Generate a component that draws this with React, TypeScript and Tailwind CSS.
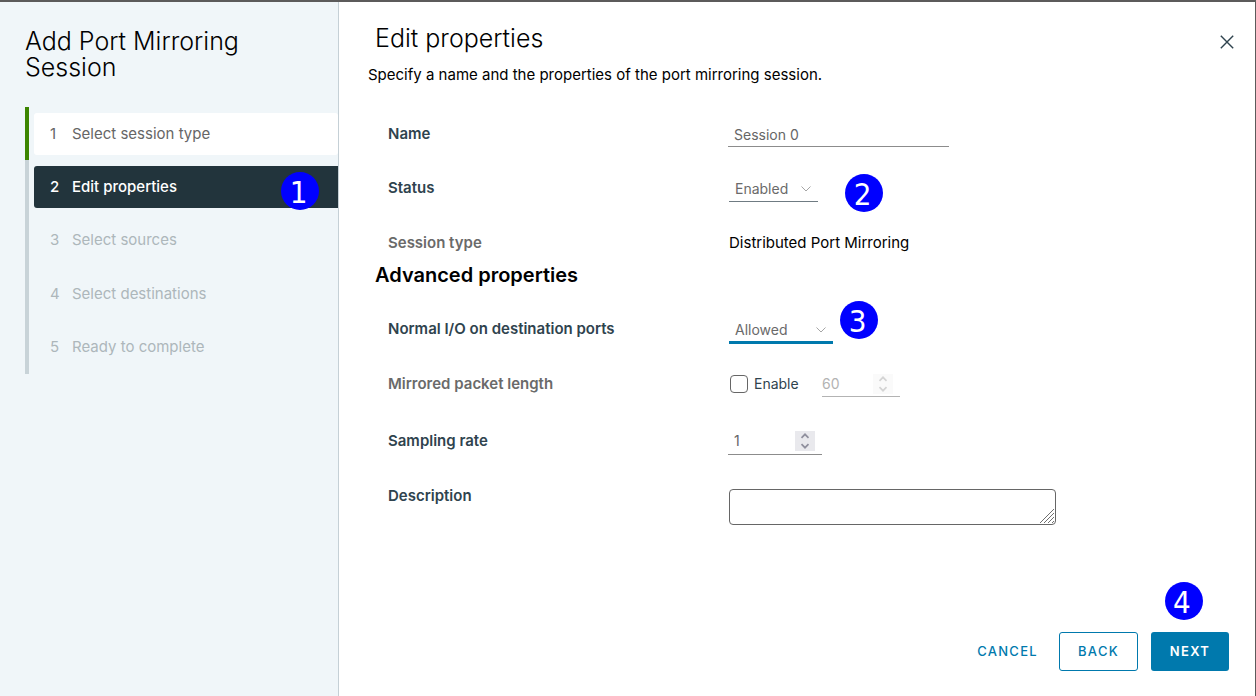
import { useState, type ReactNode } from "react";

type StepState = "done" | "current" | "upcoming";

const steps: { title: string; state: StepState }[] = [
  { title: "Select session type", state: "done" },
  { title: "Edit properties", state: "current" },
  { title: "Select sources", state: "upcoming" },
  { title: "Select destinations", state: "upcoming" },
  { title: "Ready to complete", state: "upcoming" },
];

const stepStyles: Record<StepState, string> = {
  done: "bg-white text-[#666666]",
  current: "rounded-r-none bg-[#22343c] font-medium text-white",
  upcoming: "text-[#adb7bb]",
};

function Marker({ value, className }: { value: number; className: string }) {
  return (
    <span
      className={`pointer-events-none absolute flex size-[38px] items-center justify-center rounded-full bg-[#0000ff] pt-[2px] pr-[3px] font-['DejaVu_Sans_Condensed','DejaVu_Sans',sans-serif] text-[31px] leading-none font-normal text-white ${className}`}
    >
      {value}
    </span>
  );
}

function Chevron({ className }: { className: string }) {
  return (
    <svg
      viewBox="0 0 10 6"
      className={`pointer-events-none absolute h-[6px] w-[10px] fill-none stroke-[#a5a5a5] ${className}`}
      aria-hidden="true"
    >
      <path d="M0.5 0.5 5 5 9.5 0.5" />
    </svg>
  );
}

function Row({
  label,
  htmlFor,
  muted,
  className,
  children,
}: {
  label: string;
  htmlFor?: string;
  muted?: boolean;
  className: string;
  children: ReactNode;
}) {
  const tone = muted ? "text-[#6a6a6a]" : "text-[#2f434e]";
  return (
    <div className={`flex items-start ${className}`}>
      <div className={`w-[360px] shrink-0 pl-5 text-[15px] leading-6 font-semibold ${tone}`}>
        {htmlFor ? <label htmlFor={htmlFor}>{label}</label> : label}
      </div>
      {children}
    </div>
  );
}

function NumberField({
  id,
  label,
  initial,
  disabled,
  className,
  inputClassName,
}: {
  id: string;
  label?: string;
  initial: number;
  disabled?: boolean;
  className: string;
  inputClassName: string;
}) {
  const [value, setValue] = useState(initial);
  return (
    <div
      className={`flex items-center border-b ${disabled ? "border-[#b3b3b3]" : "border-[#8c8c8c]"} ${className}`}
    >
      <input
        id={id}
        type="number"
        aria-label={label}
        value={value}
        disabled={disabled}
        onChange={(e) => setValue(Number(e.target.value))}
        className={`min-w-0 flex-1 [appearance:textfield] bg-transparent text-sm leading-6 outline-none [&::-webkit-inner-spin-button]:appearance-none ${disabled ? "text-[#b3b3b3]" : "text-[#666666]"} ${inputClassName}`}
      />
      <span
        className={`flex size-5 shrink-0 flex-col ${disabled ? "bg-[#fafafa] text-[#d4d4d4]" : "bg-[#e9e9ed] text-[#8f8f9d]"}`}
      >
        <button
          type="button"
          aria-label="Increase"
          disabled={disabled}
          onClick={() => setValue(value + 1)}
          className="flex flex-1 items-center justify-center"
        >
          <svg viewBox="0 0 10 6" className="h-[6px] w-[10px] fill-none stroke-current stroke-[1.7]">
            <path d="M1.5 4.8 5 1.3 8.5 4.8" />
          </svg>
        </button>
        <button
          type="button"
          aria-label="Decrease"
          disabled={disabled}
          onClick={() => setValue(value - 1)}
          className="flex flex-1 items-center justify-center"
        >
          <svg viewBox="0 0 10 6" className="h-[6px] w-[10px] fill-none stroke-current stroke-[1.7]">
            <path d="M1.5 1.2 5 4.7 8.5 1.2" />
          </svg>
        </button>
      </span>
    </div>
  );
}

export default function App() {
  return (
    <div className="flex min-h-screen border-t-2 border-r border-[#5c5b5b] bg-white font-[Inter,sans-serif] text-black">
      <aside className="w-[339px] shrink-0 border-r border-[#c5d0d6] bg-[#f0f6f9] pt-[26px] pl-[25px]">
        <h1 className="pr-16 text-[25px] leading-[26px] font-light">Add Port Mirroring Session</h1>
        <ol className="mt-[27px] grid h-[267px] grid-rows-5">
          {steps.map((step, i) => (
            <li
              key={step.title}
              className={`relative flex items-center border-l-4 pl-[5px] ${step.state === "done" ? "border-[#3c8500]" : "border-[#c8d3d8]"}`}
            >
              <button
                type="button"
                disabled={step.state === "upcoming"}
                aria-current={step.state === "current" ? "step" : undefined}
                className={`flex h-[42px] flex-1 items-center rounded-[3px] pl-4 text-left text-[15px] leading-6 ${stepStyles[step.state]}`}
              >
                <span className="w-[22px] shrink-0">{i + 1}</span>
                {step.title}
              </button>
              {step.state === "current" && <Marker value={1} className="top-3 right-[19px]" />}
            </li>
          ))}
        </ol>
      </aside>

      <main className="flex min-w-0 flex-1 flex-col pt-[21px] pr-[26px] pb-[25px] pl-[29px]">
        <header className="flex items-start justify-between">
          <h2 className="pl-[7px] text-[25px] leading-[30px] font-light">Edit properties</h2>
          <button type="button" aria-label="Close" className="mt-[7px] -mr-[10px] p-1 text-[#2f434e]">
            <svg viewBox="0 0 16 16" className="size-4 fill-none stroke-current stroke-[1.4]">
              <path d="M1.8 1.8 14.2 14.2M14.2 1.8 1.8 14.2" />
            </svg>
          </button>
        </header>
        <p className="mt-[9px] text-[15px] leading-6">
          Specify a name and the properties of the port mirroring session.
        </p>

        <form className="mt-[35px]" onSubmit={(e) => e.preventDefault()}>
          <Row label="Name" htmlFor="name" className="h-[54px]">
            <input
              id="name"
              defaultValue="Session 0"
              className="h-[25px] w-[221px] border-b border-[#8c8c8c] px-[6px] text-sm text-[#666666] outline-none"
            />
          </Row>
          <Row label="Status" htmlFor="status" className="h-[55px]">
            <div className="relative ml-px">
              <select
                id="status"
                defaultValue="Enabled"
                className="h-[25px] w-[89px] appearance-none border-b border-[#6f7b82] bg-transparent pt-px pr-5 pl-[6px] text-sm text-[#6a6a6a] outline-none"
              >
                <option>Enabled</option>
                <option>Disabled</option>
              </select>
              <Chevron className="top-[10px] right-[7px]" />
              <Marker value={2} className="-top-0.5 left-[116px]" />
            </div>
          </Row>
          <Row label="Session type" muted className="h-8">
            <span className="ml-px text-[15px] leading-6">Distributed Port Mirroring</span>
          </Row>

          <h3 className="h-[54px] pl-[7px] text-xl leading-6 font-semibold">Advanced properties</h3>

          <Row label="Normal I/O on destination ports" htmlFor="normal-io" className="h-[55px]">
            <div className="relative ml-px">
              <select
                id="normal-io"
                defaultValue="Allowed"
                className="h-[25px] w-[104px] appearance-none border-b-3 border-[#0079ad] bg-transparent pt-px pr-5 pl-[6px] text-sm text-[#6a6a6a] outline-none"
              >
                <option>Allowed</option>
                <option>Disallowed</option>
              </select>
              <Chevron className="top-[10px] right-[7px]" />
              <Marker value={3} className="-top-4 left-[111px]" />
            </div>
          </Row>
          <Row label="Mirrored packet length" muted className="h-[57px]">
            <label className="flex h-6 w-[94px] items-center gap-[6px] pl-0.5 text-sm text-[#2f434e]">
              <input
                type="checkbox"
                className="size-[18px] appearance-none rounded border border-[#666666] bg-white checked:bg-[#0079ad]"
              />
              Enable
            </label>
            <NumberField
              id="packet-length"
              label="Mirrored packet length"
              initial={60}
              disabled
              className="h-[25px] w-[78px] pr-[7px]"
              inputClassName="pl-0"
            />
          </Row>
          <Row label="Sampling rate" htmlFor="sampling-rate" className="h-[55px]">
            <NumberField
              id="sampling-rate"
              initial={1}
              className="h-[26px] w-[94px] pr-[7px] pb-px"
              inputClassName="pl-[6px]"
            />
          </Row>
          <Row label="Description" htmlFor="description" className="">
            <div className="relative mt-[5px] ml-px flex">
              <textarea
                id="description"
                rows={1}
                className="h-9 w-[327px] resize-none rounded border border-[#666666] px-2 py-1 text-sm outline-none"
              />
              <svg
                viewBox="0 0 16 16"
                className="pointer-events-none absolute right-px bottom-px size-4 fill-none stroke-[#6f6f6f]"
                aria-hidden="true"
              >
                <path d="M1 15 15 1M5 15 15 5M9 15 15 9M13 15 15 13" />
              </svg>
            </div>
          </Row>
        </form>

        <footer className="mt-auto flex items-center justify-end text-[13px] font-medium tracking-widest text-[#0079ad]">
          <button type="button" className="mr-[21px] h-[39px] pt-px">
            CANCEL
          </button>
          <button type="button" className="h-[39px] w-[79px] rounded-[3px] border border-[#0079ad] pt-px">
            BACK
          </button>
          <div className="relative ml-[13px]">
            <button type="button" className="h-[39px] w-[78px] rounded-[3px] bg-[#0079ad] pt-px font-semibold text-white">
              NEXT
            </button>
            <Marker value={4} className="-top-[50px] left-[14px]" />
          </div>
        </footer>
      </main>
    </div>
  );
}
